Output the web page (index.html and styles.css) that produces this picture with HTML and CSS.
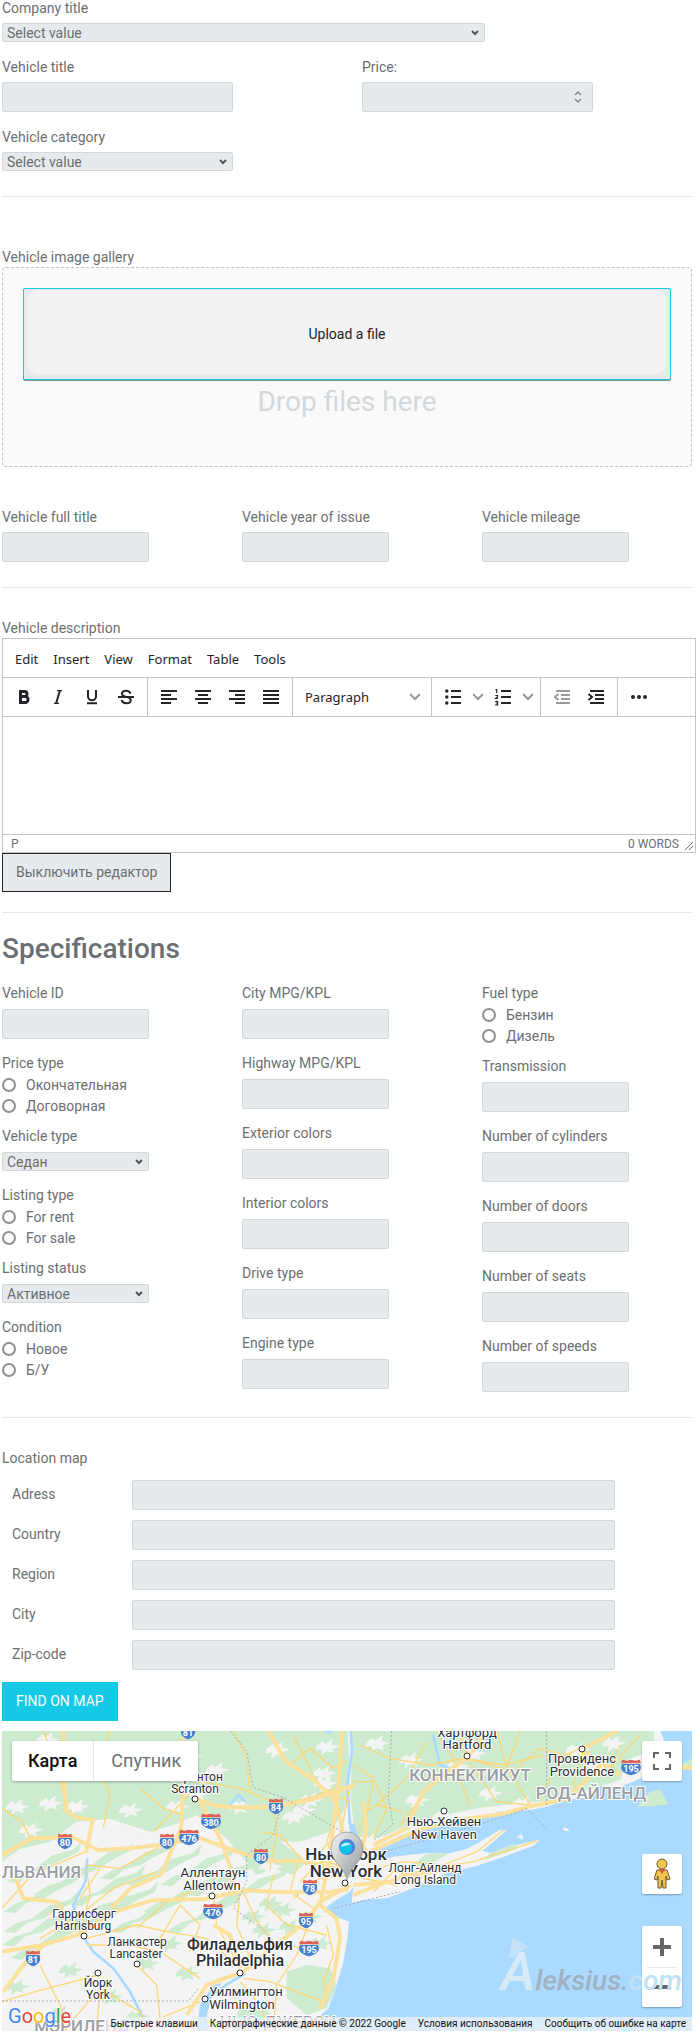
FILE: index.html
```html
<!DOCTYPE html>
<html lang="ru">
  <head>
    <meta charset="utf-8" />
    <meta name="viewport" content="width=device-width, initial-scale=1" />
    <title>Vehicle form</title>
    <link rel="stylesheet" href="styles.css">
  </head>
  <body>
    <form class="page">
      <div class="field">
        <label for="company">Company title</label>
        <select id="company"><option>Select value</option></select>
      </div>
      <div class="cols two">
        <div class="col">
          <div class="field">
            <label for="title">Vehicle title</label>
            <input type="text" id="title">
          </div>
          <div class="field">
            <label for="category">Vehicle category</label>
            <select id="category"><option>Select value</option></select>
          </div>
        </div>
        <div class="col">
          <div class="field">
            <label for="price">Price:</label>
            <input type="number" id="price">
          </div>
        </div>
      </div>

      <hr>

      <div class="gallery">
        <label for="upload">Vehicle image gallery</label>
        <div class="dropzone">
          <button type="button" class="upload" id="upload"><span>Upload a file</span></button>
          <div class="drop-text">Drop files here</div>
        </div>
      </div>

      <div class="cols three">
        <div class="field">
          <label for="full-title">Vehicle full title</label>
          <input type="text" id="full-title">
        </div>
        <div class="field">
          <label for="year">Vehicle year of issue</label>
          <input type="text" id="year">
        </div>
        <div class="field">
          <label for="mileage">Vehicle mileage</label>
          <input type="text" id="mileage">
        </div>
      </div>

      <hr>

      <div class="description">
        <label for="description">Vehicle description</label>
        <div class="editor">
          <div class="menubar">
            <button type="button">Edit</button>
            <button type="button">Insert</button>
            <button type="button">View</button>
            <button type="button">Format</button>
            <button type="button">Table</button>
            <button type="button">Tools</button>
          </div>
          <div class="toolbar">
            <div class="group">
              <button type="button" class="tool" aria-label="Bold">
                <svg viewBox="0 0 24 24"><path class="line" stroke-width="3" d="M8.500 6.500h4a2.500 2.500 0 010 5h-4zM8.500 11.500h4.600a2.900 2.900 0 010 6H8.500z"/></svg>
              </button>
              <button type="button" class="tool" aria-label="Italic">
                <svg viewBox="0 0 24 24"><path class="line" stroke-width="1.200" d="M11 5.600h5M8 18.400h5"/><path class="line" stroke-width="2" d="M13.800 6L10.200 18"/></svg>
              </button>
              <button type="button" class="tool" aria-label="Underline">
                <svg viewBox="0 0 24 24"><path class="line" stroke-width="2" d="M8 5v6.500a4 3.800 0 008 0V5M7 18.200h10"/></svg>
              </button>
              <button type="button" class="tool" aria-label="Strikethrough">
                <svg viewBox="0 0 24 24"><path class="line" stroke-width="2" d="M16.500 8.600C15.800 6.600 14.200 5.700 12.200 5.700c-2.500 0-4.200 1.200-4.200 3 0 4.200 8.700 2.200 8.700 6.300 0 2-1.900 3.300-4.400 3.300-2.400 0-4.200-1.200-4.700-3.200M4 12h16"/></svg>
              </button>
            </div>
            <div class="group">
              <button type="button" class="tool" aria-label="Align left">
                <svg viewBox="0 0 24 24"><path class="line" stroke-width="2" d="M4 6h16M4 10h10M4 14h16M4 18h10"/></svg>
              </button>
              <button type="button" class="tool" aria-label="Align center">
                <svg viewBox="0 0 24 24"><path class="line" stroke-width="2" d="M4 6h16M7 10h10M4 14h16M7 18h10"/></svg>
              </button>
              <button type="button" class="tool" aria-label="Align right">
                <svg viewBox="0 0 24 24"><path class="line" stroke-width="2" d="M4 6h16M10 10h10M4 14h16M10 18h10"/></svg>
              </button>
              <button type="button" class="tool" aria-label="Justify">
                <svg viewBox="0 0 24 24"><path class="line" stroke-width="2" d="M4 6h16M4 10h16M4 14h16M4 18h16"/></svg>
              </button>
            </div>
            <div class="group">
              <button type="button" class="format">Paragraph
                <svg class="chevron" viewBox="0 0 10 10"><path d="M0 2l5 5 5-5"/></svg>
              </button>
            </div>
            <div class="group">
              <button type="button" class="tool" aria-label="Bullet list">
                <svg viewBox="0 0 24 24"><path class="line" stroke-width="2" d="M10 6h10M10 12h10M10 18h10"/><circle cx="5.800" cy="6" r="1.700"/><circle cx="5.800" cy="12" r="1.700"/><circle cx="5.800" cy="18" r="1.700"/></svg>
              </button>
              <button type="button" class="more" aria-label="Bullet styles"><svg class="chevron" viewBox="0 0 10 10"><path d="M0 2l5 5 5-5"/></svg></button>
              <button type="button" class="tool" aria-label="Numbered list">
                <svg viewBox="0 0 24 24"><path class="line" stroke-width="2" d="M10 6h10M10 12h10M10 18h10"/><path class="line" stroke-width="1.200" d="M4.500 4.600h1.200V8M4.300 10.500h2.300v1.300l-2 1.700h2.400M4.300 16.400h2.300v3.400H4.300M4.600 18h2"/></svg>
              </button>
              <button type="button" class="more" aria-label="Number styles"><svg class="chevron" viewBox="0 0 10 10"><path d="M0 2l5 5 5-5"/></svg></button>
            </div>
            <div class="group">
              <button type="button" class="tool" aria-label="Outdent" disabled>
                <svg viewBox="0 0 24 24"><path class="line" stroke-width="2" d="M6 6h14M11 10h9M11 14h9M6 18h14M8.500 9l-3.500 3 3.500 3"/></svg>
              </button>
              <button type="button" class="tool" aria-label="Indent">
                <svg viewBox="0 0 24 24"><path class="line" stroke-width="2" d="M6 6h14M11 10h9M11 14h9M6 18h14M4.500 9L8 12l-3.500 3"/></svg>
              </button>
            </div>
            <div class="group">
              <button type="button" class="tool" aria-label="More">
                <svg viewBox="0 0 24 24"><circle cx="6" cy="12" r="2"/><circle cx="12" cy="12" r="2"/><circle cx="18" cy="12" r="2"/></svg>
              </button>
            </div>
          </div>
          <textarea id="description"></textarea>
          <div class="statusbar">
            <span>P</span>
            <span class="words">0 WORDS</span>
            <svg class="grip" viewBox="0 0 10 10"><path d="M1 9l8-8M5 9l4-4"/></svg>
          </div>
        </div>
        <button type="button" class="button toggle">Выключить редактор</button>
      </div>

      <hr>

      <h2>Specifications</h2>
      <div class="cols three specs">
        <div class="col">
          <div class="field">
            <label for="vid">Vehicle ID</label>
            <input type="text" id="vid">
          </div>
          <div class="field choices" role="radiogroup" aria-labelledby="price-type">
            <span class="caption" id="price-type">Price type</span>
            <label><input type="radio" name="price-type">Окончательная</label>
            <label><input type="radio" name="price-type">Договорная</label>
          </div>
          <div class="field">
            <label for="vtype">Vehicle type</label>
            <select id="vtype"><option>Седан</option></select>
          </div>
          <div class="field choices" role="radiogroup" aria-labelledby="listing-type">
            <span class="caption" id="listing-type">Listing type</span>
            <label><input type="radio" name="listing-type">For rent</label>
            <label><input type="radio" name="listing-type">For sale</label>
          </div>
          <div class="field">
            <label for="status">Listing status</label>
            <select id="status"><option>Активное</option></select>
          </div>
          <div class="field choices" role="radiogroup" aria-labelledby="condition">
            <span class="caption" id="condition">Condition</span>
            <label><input type="radio" name="condition">Новое</label>
            <label><input type="radio" name="condition">Б/У</label>
          </div>
        </div>
        <div class="col">
          <div class="field">
            <label for="city-mpg">City MPG/KPL</label>
            <input type="text" id="city-mpg">
          </div>
          <div class="field">
            <label for="highway-mpg">Highway MPG/KPL</label>
            <input type="text" id="highway-mpg">
          </div>
          <div class="field">
            <label for="exterior">Exterior colors</label>
            <input type="text" id="exterior">
          </div>
          <div class="field">
            <label for="interior">Interior colors</label>
            <input type="text" id="interior">
          </div>
          <div class="field">
            <label for="drive">Drive type</label>
            <input type="text" id="drive">
          </div>
          <div class="field">
            <label for="engine">Engine type</label>
            <input type="text" id="engine">
          </div>
        </div>
        <div class="col">
          <div class="field choices" role="radiogroup" aria-labelledby="fuel">
            <span class="caption" id="fuel">Fuel type</span>
            <label><input type="radio" name="fuel">Бензин</label>
            <label><input type="radio" name="fuel">Дизель</label>
          </div>
          <div class="field">
            <label for="transmission">Transmission</label>
            <input type="text" id="transmission">
          </div>
          <div class="field">
            <label for="cylinders">Number of cylinders</label>
            <input type="text" id="cylinders">
          </div>
          <div class="field">
            <label for="doors">Number of doors</label>
            <input type="text" id="doors">
          </div>
          <div class="field">
            <label for="seats">Number of seats</label>
            <input type="text" id="seats">
          </div>
          <div class="field">
            <label for="speeds">Number of speeds</label>
            <input type="text" id="speeds">
          </div>
        </div>
      </div>

      <hr>

      <div class="location">
        <div class="caption">Location map</div>
        <div class="row"><label for="address">Adress</label><input type="text" id="address"></div>
        <div class="row"><label for="country">Country</label><input type="text" id="country"></div>
        <div class="row"><label for="region">Region</label><input type="text" id="region"></div>
        <div class="row"><label for="city">City</label><input type="text" id="city"></div>
        <div class="row"><label for="zip">Zip-code</label><input type="text" id="zip"></div>
        <button type="button" class="button find">FIND ON MAP</button>
      </div>

      <div class="map">
        <svg class="canvas" viewBox="0 0 690 300" preserveAspectRatio="xMidYMid slice">
          <defs>
            <symbol id="shield" viewBox="0 0 20 20" preserveAspectRatio="none">
              <path fill="#4480cf" d="M2 6h16c3 6-1 11-8 13-7-2-11-7-8-13z"/>
              <path fill="#dd6257" d="M2 1l4 1 4-1 4 1 4-1 1 4H1z"/>
            </symbol>
            <linearGradient id="metal" x1="0" y1="0" x2="1" y2="1">
              <stop offset="0" stop-color="#f4f4f4"/>
              <stop offset="1" stop-color="#8f9499"/>
            </linearGradient>
            <path id="patch" d="M0 12l18-14 8 9 22-16-4 18 26 4-24 9 6 12-22-6-16 13 2-18-20 2z"/>
            <path id="ridge" d="M0 60L40 34l46-14 50-38 62-18 28-26-10 32-58 28-36 22-52 14-34 30z"/>
          </defs>

          <!-- terrain is drawn three times larger and scaled down -->
          <g transform="translate(-2 -6) scale(.33333)">
            <path class="land" d="M6 18H1980L1992 45 1960 75 1940 150 1900 170 1850 188 1800 180 1780 215 1700 225 1640 245 1590 255 1500 260 1420 282 1340 288 1270 312 1200 332 1150 360 1110 400 1090 440 1050 500 1000 530 968 556 1000 572 1047 590 1042 640 1030 712 1010 780 985 850 940 890 950 918H6z"/>
            <path class="forest" d="M6 410L60 372 150 350 230 290 330 282 450 320 520 300 590 270 680 340 730 400 800 350 900 350 990 320 1030 260 1050 200 1044 18H6z"/>
            <path class="forest" d="M1056 18l-4 200 10 90 30 40 60-14 90-44 110-24 90-18 110-12 120-12 100-30 90-30 20-60 80-30V18z"/>
            <path class="forest" d="M760 330l80 20 80 60-40 40-60-20-50 20-40-50zM860 740l60-20 70 10 20 50-30 70-60 20-60-50zM720 830l70 10 30 40-60 38h-60z"/>
            <g class="forest">
              <use href="#ridge" x="20" y="410"/><use href="#ridge" x="190" y="400"/><use href="#ridge" x="10" y="500"/>
              <use href="#ridge" x="210" y="480"/><use href="#ridge" x="380" y="420"/><use href="#ridge" x="430" y="500"/>
              <use href="#ridge" x="6" y="600"/><use href="#ridge" x="30" y="640"/><use href="#ridge" x="500" y="560"/>
              <use href="#ridge" x="640" y="480"/><use href="#ridge" x="330" y="560"/><use href="#ridge" x="10" y="560"/>
              <use href="#ridge" x="300" y="400"/><use href="#ridge" x="480" y="420"/><use href="#ridge" x="100" y="450"/>
              <use href="#ridge" x="250" y="530"/><use href="#ridge" x="160" y="560"/><use href="#ridge" x="560" y="450"/>
              <use href="#patch" x="20" y="770"/><use href="#patch" x="300" y="800"/><use href="#patch" x="480" y="640"/>
              <use href="#patch" x="410" y="700"/><use href="#patch" x="820" y="540"/><use href="#patch" x="760" y="600"/>
              <use href="#patch" x="930" y="640"/><use href="#patch" x="180" y="720"/><use href="#patch" x="530" y="730"/>
              <use href="#patch" x="380" y="860"/><use href="#patch" x="150" y="850"/><use href="#patch" x="900" y="560"/>
              <use href="#patch" x="780" y="520"/><use href="#patch" x="840" y="590"/><use href="#patch" x="730" y="560"/>
            </g>
            <g class="land">
              <use href="#patch" x="20" y="230"/><use href="#patch" x="120" y="220"/><use href="#patch" x="60" y="300"/>
              <use href="#patch" x="110" y="30"/><use href="#patch" x="200" y="230"/><use href="#patch" x="290" y="300"/>
              <use href="#patch" x="360" y="240"/><use href="#patch" x="540" y="80"/><use href="#patch" x="620" y="120"/>
              <use href="#patch" x="560" y="190"/><use href="#patch" x="500" y="230"/><use href="#patch" x="690" y="230"/>
              <use href="#patch" x="800" y="60"/><use href="#patch" x="945" y="160"/><use href="#patch" x="900" y="210"/>
              <use href="#patch" x="850" y="260"/><use href="#patch" x="950" y="50"/><use href="#patch" x="940" y="130"/>
              <use href="#patch" x="880" y="240"/><use href="#patch" x="400" y="340"/><use href="#patch" x="780" y="410"/>
              <use href="#patch" x="1100" y="40"/><use href="#patch" x="1080" y="330"/><use href="#patch" x="1200" y="90"/>
              <use href="#patch" x="1340" y="110"/><use href="#patch" x="1390" y="70"/><use href="#patch" x="1300" y="260"/>
              <use href="#patch" x="1440" y="190"/><use href="#patch" x="1540" y="220"/><use href="#patch" x="1700" y="60"/>
              <use href="#patch" x="1760" y="110"/><use href="#patch" x="1810" y="40"/><use href="#patch" x="1220" y="210"/>
            </g>
            <path class="land" d="M1060 480L1100 412 1180 395 1280 384 1350 384 1400 372 1440 350 1500 314 1520 316 1480 350 1446 378 1480 385 1540 362 1622 343 1600 362 1500 400 1420 425 1340 445 1240 490 1160 520 1090 525 1055 535z"/>
            <path class="forest" d="M1280 386l70-2-60 34-70 14zM1470 384l70-28 14 14-100 36z"/>
            <path class="forest" d="M1910 245l40-45 30-6 26 44-46 6zM2040 120l36-20v30z"/>
            <path class="land" d="M1690 305l12 6 8 8-20-2zM1550 335l16-8 4 18z"/>
            <path class="water" d="M600 840l40-60 26-6-30 40-16 60 10 44h-40zM970 18h30l-14 10zM1046 290l18 10 18 50-10 60-14 50-12-4 8-90z"/>
            <g class="river">
              <path d="M1052 18l4 60-14 100 8 120"/>
              <path d="M262 400l-6 70-36 70 20 80 40 60 60 50 50 70 30 60 30 58"/>
              <path d="M736 745l-50 30-60 40M690 240l26-30 20 20M1300 30l20 90 60 20"/>
            </g>
            <g class="minor">
              <path d="M6 250l60 40 30 60M130 18l50 130 20 120M330 18l-40 100 40 90-20 100M420 190l70 60 60 20M460 320l60-60 80-90 120 20 120 50"/>
              <path d="M700 18l40 80 10 100M820 245l120-30 80-30M820 245l10 80-20 110M880 30l30 60 50 100 90 40M780 320l60 10 80 90"/>
              <path d="M260 420l100 10 110-60 30-40M260 430l10 80-30 110M6 550l90-100 160-70M120 640l120-70 100-80 130-50M240 520l60-90"/>
              <path d="M260 640l150-40 90 20 120 20 100 90M260 660l120 0 100 20 120 80M410 610l90-80 100-40M300 790l-10 128M190 918l110-128 120 70 20 58"/>
              <path d="M120 720l60 120 20 78M6 830l100-30 190-50M410 720l60 60 10 100 60 30M480 640l60-100 60 60-30 80M640 500l10 100 60 110"/>
              <path d="M720 500l-10 100 40 100M730 500l40 90 50 60 90 20M820 450l-20 90 60 60 120 30M900 390l-30 110 70 50M940 560l-50 130-60 90-10 138"/>
              <path d="M730 760l80 10 160 60M720 770l60 70 30 78M980 600l20 90-30 80 10 60M600 830l-120 50-60 38M1010 260l-30 90 40 90M960 420l60-80 30-160"/>
              <path d="M1060 120l60 40 40 90-40 90M1080 60l90 40 120 20 100-20 120 20 120-30M1130 240l90-80 60-110M1200 300l100-130 90-70M1320 40l30 40 60 160M1400 100l90 130 100 10"/>
              <path d="M1400 100l140 40 80-70 120 30M1560 18l-40 110 70 110M1620 220l60-120 60-30M1740 70l90 60 90-100M1750 80l-30 100 20 40M1860 60l-40 90M1490 18l30 110"/>
              <path d="M1090 440l120-30 120 10 100-40 80-64M1090 460l100 20 110-50 120-20 190-62M1120 500l60-60 70 10"/>
              <path d="M870 120l60-50 70 60 40-20M1060 170h60l-20 100M1075 340l20-80 40-20 70 20M960 380l40-40 60 10 50 30M900 470l60-60 60 10M880 520l80-60 90-10"/>
            </g>
            <g class="major">
              <path d="M6 390l90-50 120-4 80 40 110-8 90-10 100-20 110 40 100 30 100 0 90 20 90 10"/>
              <path d="M190 18v130l10 110 30 20 48 6 -20 100"/>
              <path d="M585 220l70 24 90 4 90-4 100-20 130-44M600 230l60 110 40 110-10 50"/>
              <path d="M560 18l-30 70 20 70-6 150-60 140-90 40-60 60"/>
              <path d="M6 680l120-20 120-34 80-60 130-40 160-4 120-26 120 6 130 0 60-10"/>
              <path d="M40 440l30 80 100 10 60 90M10 800l60-80 60-60M1050 480l-90 50-40 60-80 60-110 90-110 40-60 90"/>
              <path d="M640 600l50 30 30 100M960 540l50 40 10 60-20 120-40 90"/>
              <path d="M806 18l50 90 90 60 60 60 30 120M1025 18l-10 180-15 100-10 100-30 140M960 440l90-10"/>
              <path d="M1080 400l20-90-10-80M1120 360l100-50 50-110 70-60 60-40 40-50 20-32M1110 380l150-66 120-30 120-16 100-26 100-20 70-70 60-60"/>
              <path d="M1400 100l-20-82M1750 70l60-30 40-22M1750 80l110 70M1060 480l110-10 60-24 70-6M1060 510l100-40M2030 128h46"/>
            </g>
            <g class="border">
              <path d="M690 18l50 60 20 110 90 30 190 110M850 220l-30 110-80 60 0 80-40 80 100 70"/>
              <path d="M1175 18l-10 200 14 80-60 50M1640 18v230M1000 550l200-50M1150 380l150-40 230-70 50-20 60 60M6 828h560l30-40"/>
            </g>
          </g>

          <g class="labels">
            <text class="area" x="79" y="147" text-anchor="end">ПЕНСИЛЬВАНИЯ</text>
            <text class="area" x="468" y="50" text-anchor="middle">КОННЕКТИКУТ</text>
            <text class="area" x="589" y="68" text-anchor="middle">РОД-АЙЛЕНД</text>
            <text class="area" x="80" y="301" text-anchor="middle">МЭРИЛЕНД</text>
            <text class="area" x="276" y="297" text-anchor="middle">НЬЮ-ДЖЕРСИ</text>

            <g class="town">
              <text x="194" y="50">Скрантон</text><text x="193" y="62">Scranton</text>
              <text x="82" y="187">Гаррисберг</text><text x="81" y="199">Harrisburg</text>
              <text x="135" y="215">Ланкастер</text><text x="134" y="227">Lancaster</text>
              <text x="96" y="256">Йорк</text><text x="96" y="268">York</text>
              <text x="423" y="141">Лонг-Айленд</text><text x="423" y="153">Long Island</text>
            </g>
            <g class="town mid">
              <text x="211" y="146">Аллентаун</text><text x="210" y="159">Allentown</text>
              <text x="244" y="265">Уилмингтон</text><text x="240" y="278">Wilmington</text>
              <text x="465" y="6">Хартфорд</text><text x="465" y="18">Hartford</text>
              <text x="580" y="32">Провиденс</text><text x="580" y="45">Providence</text>
              <text x="442" y="95">Нью-Хейвен</text><text x="442" y="108">New Haven</text>
            </g>
            <g class="town big">
              <text x="238" y="219">Филадельфия</text><text x="238" y="235">Philadelphia</text>
            </g>
            <g class="town huge">
              <text x="344" y="129">Нью-Йорк</text><text x="344" y="146">New York</text>
            </g>
          </g>

          <g class="dots">
            <circle cx="193" cy="68" r="3"/><circle cx="210" cy="165" r="3"/><circle cx="82" cy="205" r="3"/>
            <circle cx="135" cy="233" r="3"/><circle cx="96" cy="242" r="3"/><circle cx="238" cy="242" r="3"/>
            <circle cx="203" cy="268" r="3"/><circle cx="343" cy="152" r="3"/><circle cx="465" cy="25" r="3"/>
            <circle cx="580" cy="18" r="3"/><circle cx="442" cy="80" r="3"/>
          </g>

          <g class="shields">
            <use href="#shield" x="178" y="-8" width="16" height="17"/><text x="186" y="5">81</text>
            <use href="#shield" x="266" y="67" width="16" height="17"/><text x="274" y="80">84</text>
            <use href="#shield" x="198" y="82" width="22" height="17"/><text x="209" y="95">380</text>
            <use href="#shield" x="176" y="98" width="22" height="17"/><text x="187" y="111">476</text>
            <use href="#shield" x="55" y="102" width="16" height="17"/><text x="63" y="115">80</text>
            <use href="#shield" x="157" y="102" width="16" height="17"/><text x="165" y="115">80</text>
            <use href="#shield" x="251" y="117" width="16" height="17"/><text x="259" y="130">80</text>
            <use href="#shield" x="300" y="148" width="16" height="17"/><text x="308" y="161">78</text>
            <use href="#shield" x="200" y="172" width="22" height="17"/><text x="211" y="185">476</text>
            <use href="#shield" x="296" y="181" width="16" height="17"/><text x="304" y="194">95</text>
            <use href="#shield" x="296" y="209" width="22" height="17"/><text x="307" y="222">195</text>
            <use href="#shield" x="23" y="219" width="16" height="17"/><text x="31" y="232">81</text>
            <use href="#shield" x="618" y="28" width="22" height="17"/><text x="629" y="41">195</text>
          </g>

          <g class="pin">
            <path fill="url(#metal)" stroke="#85898d" stroke-width=".6" d="M345 149c-2-13-16-17-16-32a16 16 0 0132 0c0 15-14 19-16 32z"/>
            <circle cx="345" cy="116" r="8" fill="#4b86d6"/>
            <circle cx="344" cy="117" r="6" fill="#11c3ea"/>
            <path d="M339 116a6 5 0 0110-3l-3 1z" fill="#c5f0fb"/>
          </g>
        </svg>

        <div class="map-types">
          <button type="button" class="active">Карта</button>
          <button type="button">Спутник</button>
        </div>
        <div class="controls">
          <button type="button" class="control" aria-label="Fullscreen">
            <svg viewBox="0 0 18 18"><path fill="none" stroke="#666" stroke-width="2" d="M1 6V1h5M12 1h5v5M17 12v5h-5M6 17H1v-5"/></svg>
          </button>
          <button type="button" class="control pegman" aria-label="Street view">
            <svg viewBox="0 0 18 32"><path fill="#f2c452" stroke="#6b5a33" d="M4 12L1 21l3 1 1-4v12h3l1-8 1 8h3V18l1 4 3-1-3-9z"/><circle cx="9" cy="6" r="5" fill="#f2c452" stroke="#6b5a33"/><path fill="#e0533d" d="M6 11h6l-3 5z"/></svg>
          </button>
          <div class="zoom">
            <button type="button" aria-label="Zoom in"><svg viewBox="0 0 18 18"><path fill="#666" d="M7 0h4v7h7v4h-7v7H7v-7H0V7h7z"/></svg></button>
            <button type="button" aria-label="Zoom out"><svg viewBox="0 0 18 18"><path fill="#666" d="M0 7h18v4H0z"/></svg></button>
          </div>
        </div>
        <div class="watermark"><span class="cap">A</span><span class="rest">leksius.</span><span class="zone">com</span></div>
        <a class="google" href="#"><i class="b">G</i><i class="r">o</i><i class="y">o</i><i class="b">g</i><i class="g">l</i><i class="r">e</i></a>
        <div class="credits">
          <a href="#">Быстрые клавиши</a>
          <span>Картографические данные © 2022 Google</span>
          <a href="#">Условия использования</a>
          <a href="#">Сообщить об ошибке на карте</a>
        </div>
      </div>
    </form>
  </body>
</html>
```
FILE: styles.css
```css
* {
  box-sizing: border-box;
}

body {
  margin: 0;
  background-color: #fff;
  color: #6b6f72;
  font-family: Roboto, "Liberation Sans", sans-serif;
  font-size: 14px;
  line-height: 16px;
}

button, input, select, textarea {
  font: inherit;
  color: inherit;
  margin: 0;
}

button {
  border: 0;
  padding: 0;
  background: none;
  cursor: pointer;
}

.page {
  padding: 0 8px 9px 2px;
}

hr {
  height: 1px;
  margin: 8px 0 32px;
  border: 0;
  background-color: #e5e8ea;
}

h2 {
  margin: -14px 0 18px;
  font-size: 28px;
  line-height: 36px;
  font-weight: 500;
}

/* fields */
.cols {
  display: grid;
  column-gap: 30px;
}
.two {
  grid-template-columns: 1fr 1fr;
}
.three {
  grid-template-columns: 1fr 1fr 1fr;
}

.field {
  display: flex;
  flex-direction: column;
  align-items: flex-start;
  margin-bottom: 17px;
}
.field > label {
  margin-bottom: 7px;
}

input[type="text"], input[type="number"], select {
  width: 70%;
  height: 30px;
  border: 1px solid #d2d7da;
  border-radius: 2px;
  background-color: #e6eaed;
  appearance: none;
}
input[type="number"] {
  background-image: url("data:image/svg+xml,%3Csvg xmlns='http://www.w3.org/2000/svg' width='8' height='14' fill='none' stroke='%23888' stroke-width='1.500'%3E%3Cpath d='M1 5l3-3 3 3M1 9l3 3 3-3'/%3E%3C/svg%3E");
  background-repeat: no-repeat;
  background-position: right 10px center;
}
input[type="number"]::-webkit-inner-spin-button {
  display: none;
}
select {
  height: 19px;
  padding: 0 20px 0 4px;
  line-height: 16px;
  background-image: url("data:image/svg+xml,%3Csvg xmlns='http://www.w3.org/2000/svg' width='8' height='6' fill='none' stroke='%23555' stroke-width='2'%3E%3Cpath d='M1 1l3 3 3-3'/%3E%3C/svg%3E");
  background-repeat: no-repeat;
  background-position: right 5px center;
}

.specs {
  padding-bottom: 1px;
}
.specs .field {
  margin-bottom: 16px;
}
.specs .field > label {
  margin-bottom: 8px;
}
.specs .choices {
  margin-bottom: 12px;
}
.choices .caption {
  margin-bottom: 3px;
}
.specs .choices > label {
  display: flex;
  align-items: center;
  gap: 10px;
  height: 21px;
  margin: 0;
}
input[type="radio"] {
  width: 14px;
  height: 14px;
  border: 2px solid #8d9193;
  border-radius: 50%;
  appearance: none;
}

/* gallery */
.gallery {
  display: flex;
  flex-direction: column;
  gap: 2px;
  padding-top: 20px;
  margin-bottom: 42px;
}
.dropzone {
  height: 200px;
  padding: 20px;
  border: 1px dashed #c4c4c4;
  border-radius: 4px;
  background-color: #fafafa;
  text-align: center;
}
.upload {
  display: block;
  width: 100%;
  height: 92px;
  padding: 1px 3px 5px;
  border: 1px solid #13c9e5;
  border-radius: 2px;
  background-color: #e6eaed;
  box-shadow: 0 1px 0 #8d9193;
  color: #1e2226;
}
.upload span {
  display: flex;
  align-items: center;
  justify-content: center;
  height: 100%;
  padding-top: 4px;
  border-radius: 12px;
  background-color: #f3f3f3;
}
.drop-text {
  margin-top: 6px;
  font-size: 28px;
  line-height: 32px;
  color: #d3d8da;
}

/* editor */
.editor {
  margin: 2px -4px 0 0;
  border: 1px solid #c4c4c4;
  background-color: #fff;
  color: #222529;
}
.menubar {
  display: flex;
  gap: 15px;
  height: 39px;
  padding: 2px 12px 0;
  border-bottom: 1px solid #c4c4c4;
  font: 13px/18px "Noto Sans", sans-serif;
}
.toolbar {
  display: flex;
  height: 39px;
  border-bottom: 1px solid #c4c4c4;
}
.group {
  display: flex;
  align-items: center;
  padding: 0 4px;
  border-right: 1px solid #c4c4c4;
}
.group:last-child {
  border-right: 0;
}
.tool {
  display: flex;
  justify-content: center;
  width: 34px;
}
.tool svg {
  width: 24px;
  height: 24px;
  fill: currentColor;
}
.tool .line {
  fill: none;
  stroke: currentColor;
}
.tool:disabled {
  color: #97999b;
}
.chevron {
  width: 10px;
  height: 10px;
  fill: none;
  stroke: #97999b;
  stroke-width: 2px;
}
.more {
  width: 16px;
  text-align: center;
}
.format {
  display: flex;
  align-items: center;
  justify-content: space-between;
  width: 130px;
  padding: 0 7px 0 8px;
  font: 13px/18px "Noto Sans", sans-serif;
}
.editor textarea {
  display: block;
  width: 100%;
  height: 117px;
  border: 0;
  resize: none;
}
.statusbar {
  display: flex;
  align-items: center;
  height: 18px;
  padding: 1px 1px 0 8px;
  border-top: 1px solid #c4c4c4;
  font-size: 12px;
  color: #6b6f72;
}
.words {
  margin-left: auto;
}
.grip {
  width: 10px;
  height: 10px;
  margin: 4px 0 0 5px;
  fill: none;
  stroke: #6b6f72;
}

.button {
  display: block;
  height: 39px;
  padding: 0 14px 1px;
}
.toggle {
  margin-bottom: 20px;
  padding: 0 13px 1px;
  border: 1px solid #24282c;
  background-color: #e6eaed;
}

/* location */
.location .caption {
  margin-bottom: 14px;
}
.row {
  display: flex;
  align-items: center;
  margin-bottom: 10px;
}
.row label {
  flex: 0 0 130px;
  padding: 0 0 2px 10px;
}
.find {
  margin: 12px 0 10px;
  background-color: #13c9e5;
  color: #fff;
}

/* map */
.map {
  position: relative;
  height: 300px;
  overflow: hidden;
  background-color: #aadaff;
}
.canvas {
  display: block;
  width: 100%;
  height: 100%;
}
.land {
  fill: #f4f4f4;
}
.forest {
  fill: #cdebcf;
}
.water {
  fill: #aadaff;
}
.river, .minor, .major, .border {
  fill: none;
  stroke-linejoin: round;
}
.river {
  stroke: #aadaff;
  stroke-width: 8;
}
.minor {
  stroke: #fcd778;
  stroke-width: 4;
}
.major {
  stroke: #fbe19b;
  stroke-width: 12;
}
.border {
  stroke: #a9abb5;
  stroke-width: 3;
  stroke-dasharray: 6 6;
}
.labels text {
  paint-order: stroke;
  stroke: #fff;
  stroke-width: 2px;
  stroke-linejoin: round;
}
.area {
  font-size: 17px;
  font-weight: 500;
  fill: #9a9da3;
}
.town {
  font-size: 12px;
  fill: #2b2e33;
  text-anchor: middle;
}
.mid {
  font-size: 13px;
}
.big {
  font-size: 16px;
  font-weight: 500;
}
.huge {
  font-size: 17px;
  font-weight: 500;
}
.dots {
  fill: #fff;
  stroke: #2b2e33;
}
.shields {
  font-size: 9px;
  font-weight: 700;
  fill: #fff;
  text-anchor: middle;
}

.map-types {
  position: absolute;
  top: 10px;
  left: 10px;
  display: flex;
  height: 40px;
  border-radius: 2px;
  background-color: #fff;
  box-shadow: 0 1px 3px rgba(0, 0, 0, .3);
  font-size: 18px;
}
.map-types button {
  padding: 0 17px;
}
.map-types .active {
  padding: 0 16px;
  border-right: 1px solid #e6e6e6;
  color: #111;
  font-weight: 500;
}
.controls {
  position: absolute;
  top: 10px;
  right: 10px;
  width: 40px;
}
.control, .zoom {
  display: flex;
  align-items: center;
  justify-content: center;
  width: 40px;
  height: 40px;
  border-radius: 2px;
  background-color: #fff;
  box-shadow: 0 1px 2px rgba(0, 0, 0, .3);
}
.controls svg {
  display: block;
  width: 18px;
  height: 18px;
}
.pegman {
  margin: 73px 0 32px;
}
.controls .pegman svg {
  height: 32px;
}
.zoom {
  flex-direction: column;
  height: 81px;
}
.zoom button {
  display: flex;
  align-items: center;
  justify-content: center;
  width: 30px;
  height: 40px;
}
.zoom button + button {
  border-top: 1px solid #e6e6e6;
}
.watermark {
  position: absolute;
  right: 10px;
  bottom: 25px;
  display: flex;
  align-items: baseline;
  font-size: 28px;
  line-height: 50px;
  font-style: italic;
  font-weight: 500;
  color: #a0b1c0;
  pointer-events: none;
}
.watermark .cap {
  font-size: 54px;
  color: #d6eaf8;
}
/* sail above the first letter */
.watermark .cap::before {
  content: "";
  position: absolute;
  top: -10px;
  left: 8px;
  width: 20px;
  height: 22px;
  background-color: #c4e3f8;
  clip-path: polygon(20% 0, 100% 45%, 0 100%);
}
.watermark .zone {
  color: #c0e2f7;
}
.google {
  position: absolute;
  left: 6px;
  bottom: 3px;
  font-size: 20px;
  line-height: 24px;
  text-decoration: none;
  text-shadow: 0 0 2px #fff, 0 0 2px #fff;
}
.google i {
  font-style: normal;
}
.b { color: #4285f4; }
.r { color: #ea4335; }
.y { color: #fbbc05; }
.g { color: #34a853; }

.credits {
  position: absolute;
  right: 0;
  bottom: 0;
  display: flex;
  height: 14px;
  background-color: rgba(245, 245, 245, .7);
  font-size: 10px;
  line-height: 14px;
  color: #111;
}
.credits > * {
  padding: 0 6px;
  color: inherit;
  text-decoration: none;
  white-space: nowrap;
}
```
